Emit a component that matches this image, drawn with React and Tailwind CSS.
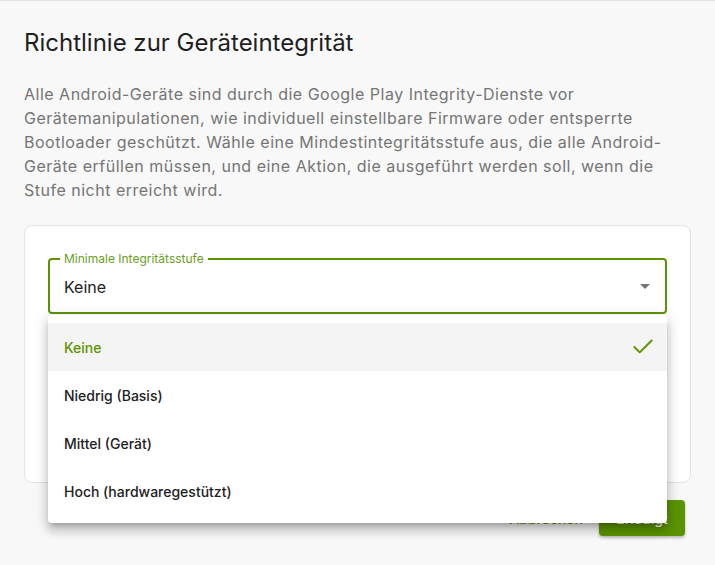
import { Check } from 'lucide-react'

const options = ['Keine', 'Niedrig (Basis)', 'Mittel (Gerät)', 'Hoch (hardwaregestützt)']

export default function App() {
  const selected = 'Keine'

  return (
    <div className="min-h-[565px] w-[715px] bg-[#f8f8f8] border-t border-[#e0e0e0] font-['Inter',sans-serif] relative">
      <div className="px-6 pt-[26px]">
        <h1 className="text-[24px] leading-[32px] text-[#1f1f1f]">Richtlinie zur Geräteintegrität</h1>
        <p className="mt-[23px] text-[16px] leading-[24px] tracking-[0.5px] text-[#757575]">
          Alle Android-Geräte sind durch die Google Play Integrity-Dienste vor Gerätemanipulationen, wie individuell einstellbare Firmware oder entsperrte Bootloader geschützt. Wähle eine Mindestintegritätsstufe aus, die alle Android-Geräte erfüllen müssen, und eine Aktion, die ausgeführt werden soll, wenn die Stufe nicht erreicht wird.
        </p>

        {/* Card */}
        <div className="mt-[23px] h-[258px] bg-white border border-[#e3e3e3] rounded-lg px-[23px] pt-[32px] relative">
          <div className="relative h-[56px] border-2 border-[#5f9200] rounded-[4px] flex items-center pl-[14px] pr-[14px]">
            <span className="absolute -top-[9px] left-[10px] bg-white px-[4px] text-[12px] leading-[16px] text-[#6a9e1f]">
              Minimale Integritätsstufe
            </span>
            <span className="flex-1 text-[16px] text-[#212121] pt-[1px]">{selected}</span>
            <svg width="10" height="5" viewBox="0 0 10 5" className="mr-[1px]">
              <path d="M0 0 L10 0 L5 5 Z" fill="#757575" />
            </svg>
          </div>
          <div className="mt-[24px] h-[56px] border border-[#9e9e9e] rounded-[4px]" />

          {/* Dropdown menu */}
          <div className="absolute left-[23px] right-[23px] top-[89px] z-10 bg-white rounded-[4px] py-2 shadow-[0_5px_5px_-3px_rgba(0,0,0,0.2),0_8px_10px_1px_rgba(0,0,0,0.14),0_3px_14px_2px_rgba(0,0,0,0.12)]">
            {options.map(o => (
              <div
                key={o}
                className={`h-12 flex items-center px-4 text-[14px] font-medium ${o === selected ? 'bg-[#f4f4f4] text-[#5f9200]' : 'text-[#212121]'}`}
              >
                <span className="flex-1">{o}</span>
                {o === selected && <Check size={26} strokeWidth={1.8} className="text-[#5f9200] -mr-[5px]" />}
              </div>
            ))}
          </div>
        </div>

        {/* Actions */}
        <div className="flex justify-end items-center gap-2 mt-[17px] pr-[6px]">
          <button className="px-2 h-9 text-[14px] font-medium text-[#5f9200]">Abbrechen</button>
          <button className="h-9 w-[86px] rounded-[4px] bg-[#5a9400] text-white text-[14px] font-medium shadow-[0_2px_3px_rgba(0,0,0,0.25)]">Erledigt</button>
        </div>
      </div>
    </div>
  )
}
